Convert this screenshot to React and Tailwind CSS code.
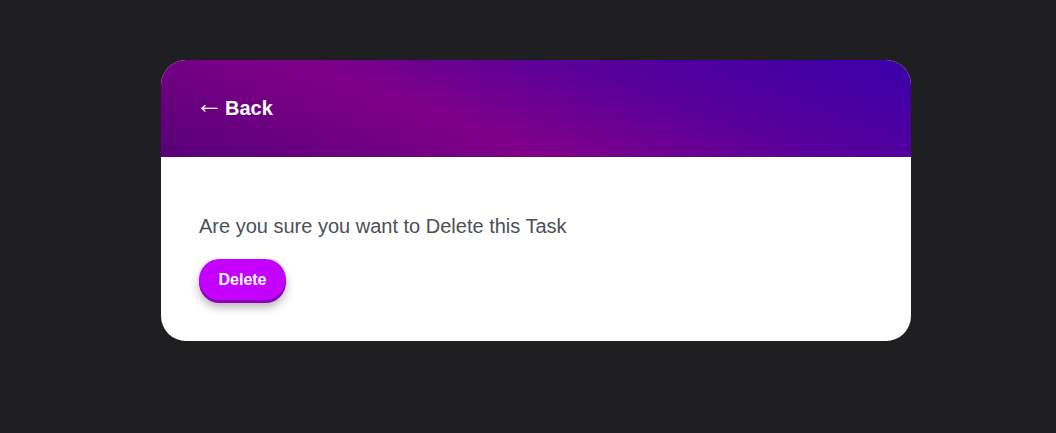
export default function App() {
  return (
    <div className="flex min-h-[433px] w-full items-start justify-center bg-[#1f1f21] pl-[16px] pt-[60px] font-['Liberation_Sans',Arial,sans-serif]">
      <div className="w-[750px] overflow-hidden rounded-[25px] bg-white">
        <header className="flex h-[97px] items-center bg-[linear-gradient(20deg,#580078_0%,#7f0088_38%,#5a009a_65%,#3a00aa_100%)] px-[34px] pb-[2px]">
          <button className="flex items-center text-[20px] font-bold leading-none text-white">
            <span className="mr-[2px] -translate-y-[4px] text-[28px] font-normal leading-none">←</span>
            Back
          </button>
        </header>
        <section className="px-[38px] pb-[41px] pt-[55px]">
          <p className="text-[20px] leading-[28px] text-[#4b5057]">Are you sure you want to Delete this Task</p>
          <button className="mt-[19px] h-[41px] w-[87px] rounded-full bg-[#c400ff] text-[16px] font-bold text-white shadow-[0_3px_0_#8c00b8,0_7px_10px_rgba(0,0,0,0.3)]">
            Delete
          </button>
        </section>
      </div>
    </div>
  );
}
